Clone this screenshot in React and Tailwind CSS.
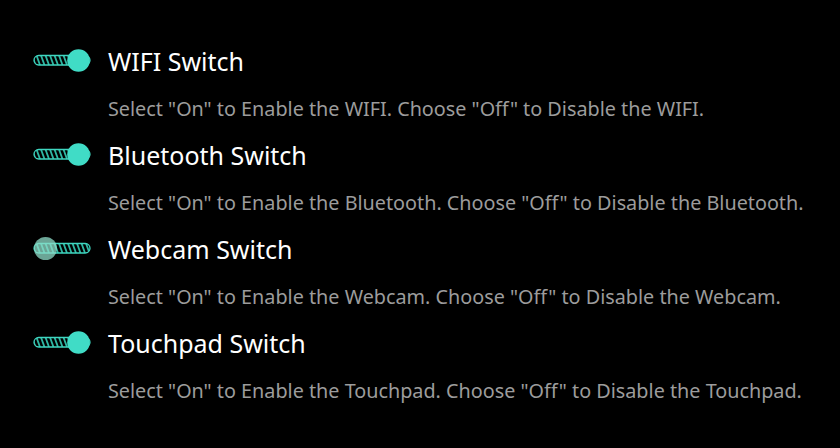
import { useId } from "react";

const items = [
  { name: "WIFI", on: true },
  { name: "Bluetooth", on: true },
  { name: "Webcam", on: false },
  { name: "Touchpad", on: true },
];

function Toggle({ on }) {
  const id = useId().replace(/:/g, "");
  const stripes = [];
  for (let x = -6; x < 62; x += 4.5) {
    stripes.push(<line key={x} x1={x} y1="5" x2={x + 4} y2="16" stroke="#2fb8a4" strokeWidth="1.8" />);
  }
  return (
    <svg width="60" height="24" viewBox="0 0 60 24" className="shrink-0">
      <defs>
        <clipPath id={`c${id}`}>
          <rect x="1" y="6.5" width="56" height="9.5" rx="4.75" />
        </clipPath>
      </defs>
      <g clipPath={`url(#c${id})`}>{stripes}</g>
      <rect x="1" y="6.5" width="56" height="9.5" rx="4.75" fill="none" stroke="#3fd6c0" strokeWidth="1.3" />
      {on ? (
        <circle cx="45.5" cy="11.5" r="11.3" fill="#40dcc6" />
      ) : (
        <circle cx="12.5" cy="11.5" r="11.5" fill="#8fdcc8" fillOpacity="0.75" />
      )}
    </svg>
  );
}

export default function App() {
  return (
    <div className="min-h-screen w-[840px] h-[448px] bg-black pl-[33px] pt-[45px] font-['Noto_Sans',sans-serif] overflow-hidden">
      {items.map((it) => (
        <div key={it.name} className="h-[94px]">
          <div className="flex items-center h-8 gap-[15px]">
            <Toggle on={it.on} />
            <span className="text-white text-[25px] leading-8">{it.name} Switch</span>
          </div>
          <p className="ml-[75px] mt-[18px] text-[19.8px] leading-7 text-[#9c9c9c]">
            Select "On" to Enable the {it.name}. Choose "Off" to Disable the {it.name}.
          </p>
        </div>
      ))}
    </div>
  );
}
